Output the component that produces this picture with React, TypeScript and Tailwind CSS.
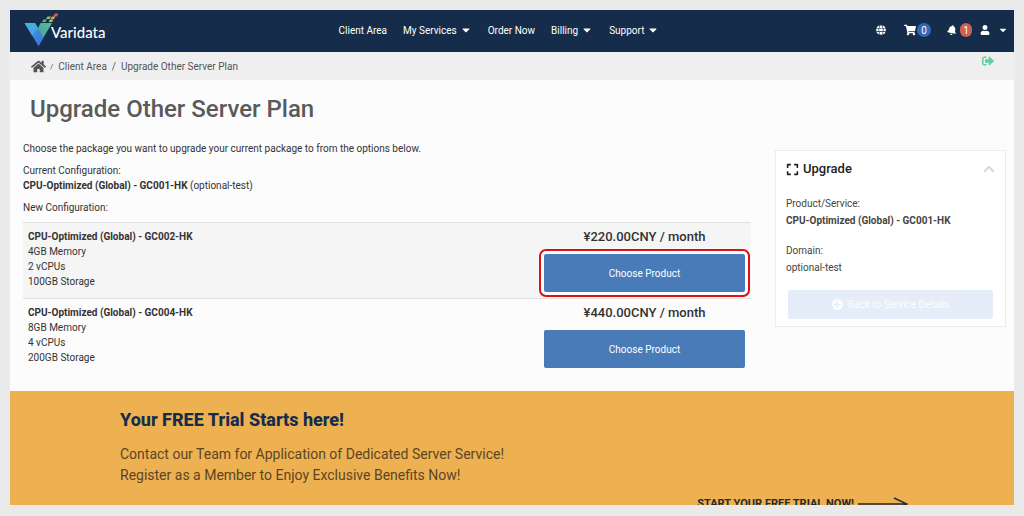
import { useState } from 'react';
import {
  FaArrowCircleLeft,
  FaBell,
  FaCaretDown,
  FaChevronUp,
  FaExpand,
  FaGlobe,
  FaHome,
  FaShoppingCart,
  FaSignOutAlt,
  FaUser,
} from 'react-icons/fa';

const navItems = [
  { label: 'Client Area', menu: false },
  { label: 'My Services', menu: true },
  { label: 'Order Now', menu: false },
  { label: 'Billing', menu: true },
  { label: 'Support', menu: true },
];

const plans = [
  {
    name: 'CPU-Optimized (Global) - GC002-HK',
    specs: ['4GB Memory', '2 vCPUs', '100GB Storage'],
    price: '¥220.00CNY / month',
    highlighted: true,
  },
  {
    name: 'CPU-Optimized (Global) - GC004-HK',
    specs: ['8GB Memory', '4 vCPUs', '200GB Storage'],
    price: '¥440.00CNY / month',
    highlighted: false,
  },
];

function Logo() {
  return (
    <a href="#" className="flex items-center text-white">
      <svg width="37" height="34" viewBox="0 0 37 34" aria-hidden="true">
        <defs>
          <linearGradient id="left" x1="0" y1="0" x2="0.6" y2="1">
            <stop offset="0" stopColor="#35a9e0" />
            <stop offset="1" stopColor="#3f78d8" />
          </linearGradient>
          <linearGradient id="right" x1="1" y1="0" x2="0" y2="1">
            <stop offset="0" stopColor="#5fc083" />
            <stop offset="0.55" stopColor="#46a9a5" />
            <stop offset="1" stopColor="#3f8fe0" />
          </linearGradient>
        </defs>
        <path d="M18.500 10H30L16.500 33L12 24Z" fill="url(#right)" />
        <path d="M2.500 10H13L18.500 19L21 25L16.500 33Z" fill="url(#left)" />
        <path d="M2.500 10H13L16 15L10 23Z" fill="#5fc5f0" opacity="0.4" />
        <path d="M21.500 6.500H25L23.500 9H20Z" fill="#4fbd84" />
        <path d="M28 6.500H31.500L30 9H26.500Z" fill="#a3c47a" />
        <path d="M25.500 3.500H29L27.500 6H24Z" fill="#8fbf6a" />
        <path d="M30 3.500H33.500L32 6H28.500Z" fill="#eda646" />
        <path d="M33 0.500H36.500L35 3.500H31Z" fill="#e2574c" />
      </svg>
      <span className="-ml-2 mt-1 font-['Lato',sans-serif] text-[15px] leading-4 font-medium">Varidata</span>
    </a>
  );
}

function Header() {
  return (
    <header className="flex h-[42px] shrink-0 items-center bg-[#152d4b] pr-[6px] pb-[2px] pl-3 text-white shadow-sm">
      <div className="flex-1">
        <Logo />
      </div>
      <nav className="mr-8 flex items-center gap-4 text-[10px]">
        {navItems.map((item) => (
          <a key={item.label} href="#" className="flex items-center gap-[3px]">
            {item.label}
            {item.menu && <FaCaretDown size={12} />}
          </a>
        ))}
      </nav>
      <div className="flex flex-1 items-center justify-end text-[10px]">
        <button aria-label="Language" className="mr-[18px]">
          <FaGlobe size={10} />
        </button>
        <button aria-label="Cart" className="mr-4 flex items-center gap-px">
          <FaShoppingCart size={12} />
          <span className="flex h-[14px] w-[14px] items-center justify-center rounded-full bg-[#3268b5]">0</span>
        </button>
        <button aria-label="Notifications" className="mr-2 flex items-center gap-[3px]">
          <FaBell size={10} className="rotate-12" />
          <span className="flex h-[14px] w-3 items-center justify-center rounded-full bg-[#cc6151]">1</span>
        </button>
        <button aria-label="Account" className="flex items-center gap-2">
          <FaUser size={10} />
          <FaCaretDown size={10} />
        </button>
      </div>
    </header>
  );
}

function Breadcrumb() {
  return (
    <div className="flex h-7 shrink-0 items-center justify-between bg-[#efefef] pr-5 pl-[21px] text-[10px] text-[#555]">
      <nav aria-label="Breadcrumb" className="flex items-center">
        <a href="#" aria-label="Home">
          <FaHome size={15} />
        </a>
        <span className="mx-1 text-[8px]">/</span>
        <a href="#" className="ml-px">Client Area</a>
        <span className="mx-[5px]">/</span>
        <span>Upgrade Other Server Plan</span>
      </nav>
      <button aria-label="Log out" className="mb-[10px] text-[#5fd0a5]">
        <FaSignOutAlt size={12} />
      </button>
    </div>
  );
}

function PlanTable() {
  return (
    <table className="w-full border-collapse">
      <tbody>
        {plans.map((plan) => (
          <tr key={plan.name} className="border-t border-[#e2e2e2] align-top odd:bg-[#f5f5f5]">
            <td className="px-[5px] py-[6px]">
              <strong>{plan.name}</strong>
              {plan.specs.map((spec) => (
                <div key={spec}>{spec}</div>
              ))}
            </td>
            <td className="w-[213px] px-[6px] pt-1 pb-[6px] text-center">
              <div className="mb-[7px] text-[13px] leading-5 font-medium text-[#333]">{plan.price}</div>
              <button
                className={`block h-[38px] w-full rounded-xs bg-[#497bb8] text-white ${
                  plan.highlighted ? 'ring-3 ring-white outline-2 outline-offset-3 outline-[#dd1111]' : ''
                }`}
              >
                Choose Product
              </button>
            </td>
          </tr>
        ))}
      </tbody>
    </table>
  );
}

function UpgradePanel() {
  const [open, setOpen] = useState(true);

  return (
    <aside className="mt-[9px] w-[231px] shrink-0 self-start border border-[#ececec] bg-white px-[10px] pt-2 pb-[7px] text-[#444]">
      <div className="flex items-center justify-between">
        <h2 className="flex items-center gap-1 text-[13px] leading-5 font-medium text-[#222]">
          <FaExpand size={13} />
          Upgrade
        </h2>
        <button aria-label="Toggle panel" onClick={() => setOpen(!open)} className="text-[#d5d5d5]">
          <FaChevronUp size={12} />
        </button>
      </div>
      {open && (
        <div className="pt-4 leading-[17px]">
          <p>Product/Service:</p>
          <p className="mb-[13px] font-bold">CPU-Optimized (Global) - GC001-HK</p>
          <p>Domain:</p>
          <p className="mb-[14px]">optional-test</p>
          <a
            href="#"
            className="mx-[2px] flex h-[29px] items-center justify-center gap-[5px] rounded-xs bg-[#e4edf8] text-[#fbfdff]"
          >
            <FaArrowCircleLeft size={11} />
            Back to Service Details
          </a>
        </div>
      )}
    </aside>
  );
}

function TrialBanner() {
  return (
    <section className="flex-1 bg-[#eeb151] pt-[17px] pr-[106px] pl-[110px]">
      <h2 className="text-lg leading-6 font-extrabold text-[#152d4b]">Your FREE Trial Starts here!</h2>
      <p className="mt-3 text-sm leading-[21px] text-[#5b4526]">
        Contact our Team for Application of Dedicated Server Service!
        <br />
        Register as a Member to Enjoy Exclusive Benefits Now!
      </p>
      <div className="mt-[10px] flex justify-end">
        <a href="#" className="flex items-center gap-1 text-[11px] leading-4 font-bold text-[#222b33]">
          START YOUR FREE TRIAL NOW!
          <svg width="50" height="16" viewBox="0 0 50 16" fill="none" stroke="currentColor" strokeWidth="1.5">
            <path d="M0 8H49M36 2L49 8L36 14" />
          </svg>
        </a>
      </div>
    </section>
  );
}

export default function App() {
  return (
    <div className="h-screen bg-[#eaeaea] px-[10px] pt-[10px] pb-[11px] font-['Roboto',sans-serif] text-[10px] leading-[15px] text-[#333]">
      <div className="flex h-full flex-col overflow-hidden bg-[#fcfcfc]">
        <Header />
        <Breadcrumb />
        <main className="shrink-0 pr-2 pb-[17px] pl-[13px]">
          <h1 className="px-[7px] pt-[13px] text-2xl leading-8 font-medium text-[#5a5a5a]">Upgrade Other Server Plan</h1>
          <div className="mt-4 flex gap-6">
            <div className="flex-1">
              <p className="mb-[7px]">
                Choose the package you want to upgrade your current package to from the options below.
              </p>
              <p className="mb-[7px]">
                Current Configuration:
                <br />
                <strong>CPU-Optimized (Global) - GC001-HK</strong> (optional-test)
              </p>
              <p className="mb-[7px]">New Configuration:</p>
              <PlanTable />
            </div>
            <UpgradePanel />
          </div>
        </main>
        <TrialBanner />
      </div>
    </div>
  );
}
